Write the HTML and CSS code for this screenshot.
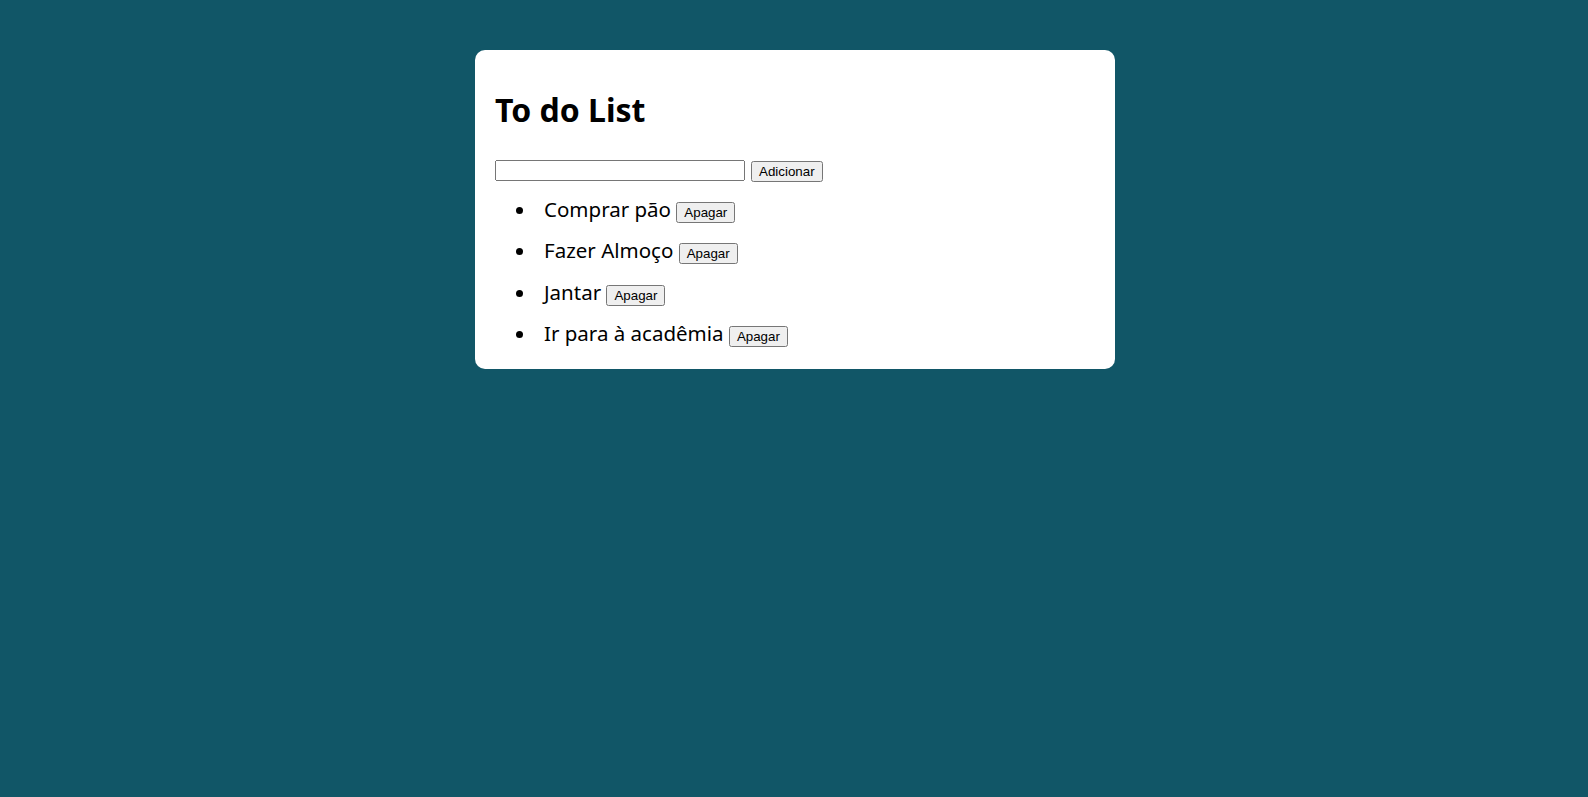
FILE: index.html
```html
<!DOCTYPE html>
<html lang="pt-BR">
<head>
<meta charset="utf-8">
<title>To do List</title>
<link rel="stylesheet" href="styles.css">
</head>
<body>
<main class="card">
  <h1 class="title">To do List</h1>
  <form class="add-form">
    <input class="add-input" type="text">
    <button class="btn" type="button">Adicionar</button>
  </form>
  <ul class="todo-list">
    <li class="todo-item">Comprar pão <button class="btn" type="button">Apagar</button></li>
    <li class="todo-item">Fazer Almoço <button class="btn" type="button">Apagar</button></li>
    <li class="todo-item">Jantar <button class="btn" type="button">Apagar</button></li>
    <li class="todo-item">Ir para à acadêmia <button class="btn" type="button">Apagar</button></li>
  </ul>
</main>
</body>
</html>
```

FILE: styles.css
```css
html, body {
  margin: 0;
  padding: 0;
}

body {
  background: #115667;
  font-family: "Noto Sans", "Open Sans", sans-serif;
  font-size: 16px;
  color: #000;
  min-height: 797px;
  padding-left: 2px;
}

.card {
  width: 600px;
  margin: 50px auto 0;
  padding: 17px 20px 22px;
  background: #fff;
  border-radius: 10px;
}

.title {
  font-size: 32px;
  font-weight: 700;
  margin: 21.44px 0 0;
}

.add-form {
  display: flex;
  align-items: flex-start;
  gap: 6px;
  margin-top: 29px;
}

.add-input {
  box-sizing: border-box;
  width: 250px;
  height: 21px;
  margin: 0;
  font-family: "Liberation Sans", Arial, sans-serif;
  font-size: 13.333px;
}

.btn {
  font-family: "Liberation Sans", Arial, sans-serif;
  font-size: 13.333px;
  margin: 0;
}

.add-form .btn {
  margin-top: 1px;
}

.todo-list {
  margin: 12.2px 0 0;
  padding-left: 42px;
}

.todo-item {
  font-size: 20.5px;
  padding-left: 7px;
}

.todo-item + .todo-item {
  margin-top: 13.6px;
}
```
